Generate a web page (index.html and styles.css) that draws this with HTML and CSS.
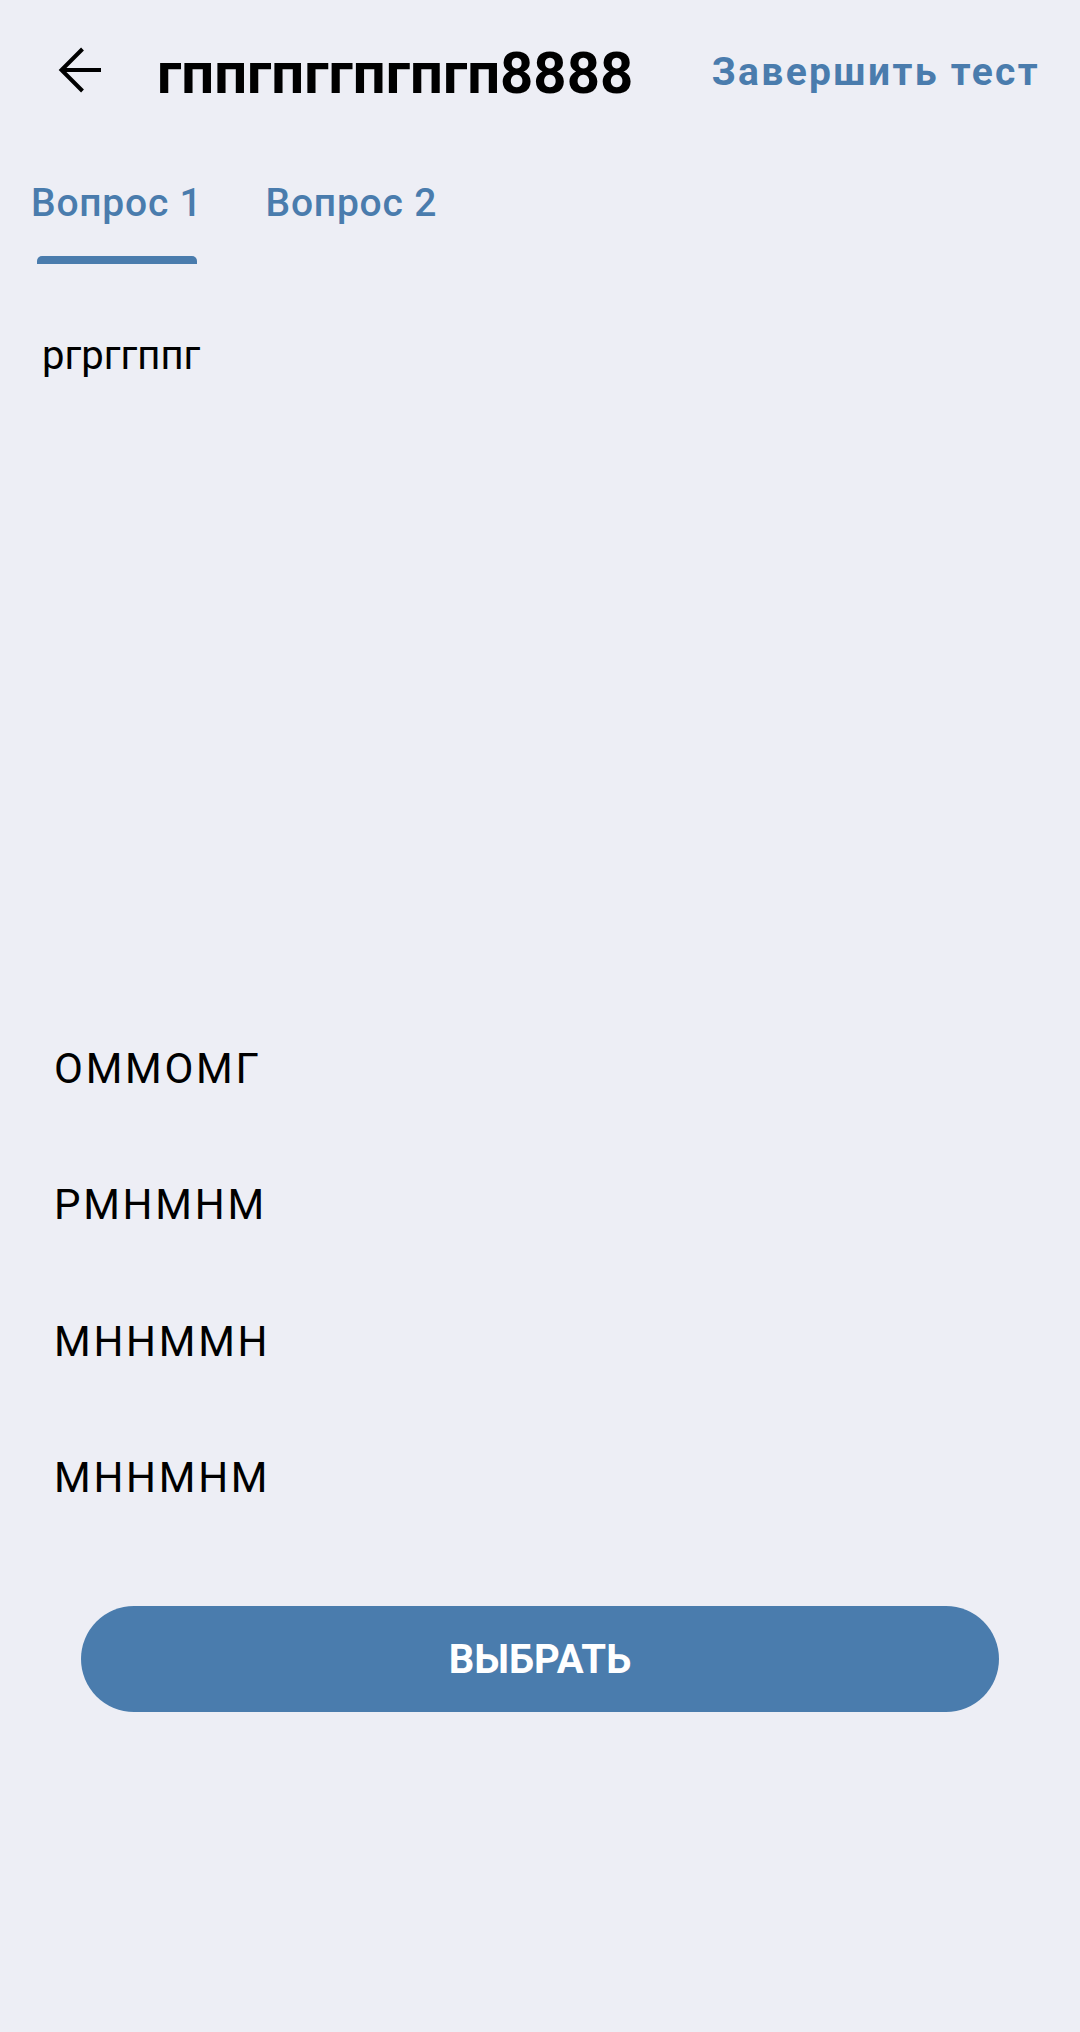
FILE: index.html
```html
<!DOCTYPE html>
<html lang="ru">
<head>
<meta charset="utf-8">
<link rel="stylesheet" href="styles.css">
</head>
<body>
<div class="screen">
  <header class="appbar">
    <button class="back" aria-label="Назад">
      <svg width="48" height="48" viewBox="0 0 48 48" fill="none" stroke="#000" stroke-width="4" stroke-linejoin="miter">
        <path d="M5 24H45"/>
        <path d="M26.5 3 5.5 24 26.5 45"/>
      </svg>
    </button>
    <h1 class="title">гппгпггпгпгп8888</h1>
    <a class="finish">Завершить тест</a>
  </header>

  <nav class="tabs">
    <div class="tab active"><span class="tab-label">Вопрос 1</span><span class="indicator"></span></div>
    <div class="tab"><span class="tab-label">Вопрос 2</span></div>
  </nav>

  <p class="question">ргрггппг</p>

  <ul class="options">
    <li class="option">ОММОМГ</li>
    <li class="option">РМНМНМ</li>
    <li class="option">МННММН</li>
    <li class="option">МННМНМ</li>
  </ul>

  <div class="actions">
    <button class="choose">ВЫБРАТЬ</button>
  </div>
</div>
</body>
</html>
```

FILE: styles.css
```css
* { box-sizing: border-box; }

html, body {
  margin: 0;
  padding: 0;
  background: #edeef5;
}

body {
  font-family: Roboto, "Noto Sans", "Liberation Sans", sans-serif;
  color: #000;
  width: 1080px;
  height: 2032px;
}

.screen {
  display: flex;
  flex-direction: column;
}

.appbar {
  display: flex;
  align-items: center;
  height: 140px;
}

.back {
  display: flex;
  border: 0;
  background: none;
  padding: 0;
  margin-left: 56px;
  width: 48px;
  height: 48px;
}

.title {
  margin: 6px 0 0 53px;
  font-size: 58px;
  font-weight: 700;
  line-height: normal;
  flex: 1;
}

.finish {
  margin: 3px 40px 0 0;
  font-size: 39px;
  font-weight: 700;
  letter-spacing: 0.06em;
  color: #4a7cad;
}

.tabs {
  display: flex;
  gap: 63px;
  padding: 40px 0 0 31px;
  height: 124px;
}

.tab {
  display: flex;
  flex-direction: column;
}

.tab-label {
  font-size: 39px;
  font-weight: 500;
  letter-spacing: 0.02em;
  color: #4a7cad;
  line-height: 46px;
}

.indicator {
  margin: 30px 0 0 6px;
  width: 160px;
  height: 8px;
  background: #4a7cad;
  border-radius: 5px 5px 0 0;
}

.question {
  margin: 67px 0 0 42px;
  font-size: 40px;
  line-height: 49px;
  height: 49px;
}

.options {
  list-style: none;
  margin: 620px 0 0 0;
  padding: 0;
}

.option {
  height: 136.5px;
  display: flex;
  align-items: center;
  padding-left: 54px;
  font-size: 42px;
  letter-spacing: 0.065em;
  line-height: 49px;
}

.actions {
  padding: 60px 81px 0;
}

.choose {
  width: 100%;
  height: 106px;
  border: 0;
  border-radius: 53px;
  background: #4a7cad;
  color: #fff;
  font-family: Roboto, "Noto Sans", sans-serif;
  font-size: 40px;
  font-weight: 700;
}
```
